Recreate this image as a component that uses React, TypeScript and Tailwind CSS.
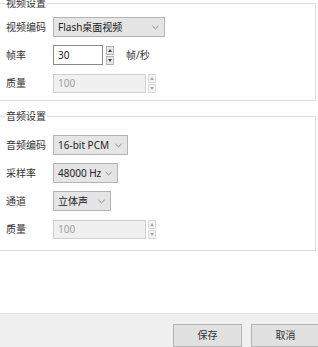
import React from 'react';

const font = { fontFamily: '"Noto Sans", "Noto Sans CJK SC", sans-serif' };

function Chevron() {
  return (
    <svg viewBox="0 0 8 5" className="w-[7px] h-[5px] shrink-0" fill="none">
      <path d="M0.5 0.8 L4 4 L7.5 0.8" stroke="#6b6b6b" strokeWidth="0.9" />
    </svg>
  );
}

function Combo({ value, width }: { value: string; width: string }) {
  return (
    <div className={`${width} h-[20px] flex items-center justify-between pl-[4px] pr-[5px] bg-[#e5e5e5] border border-[#b4b4b4] text-[#222]`}>
      <span className="truncate">{value}</span>
      <Chevron />
    </div>
  );
}

function Spinner({ disabled }: { disabled?: boolean }) {
  const half = disabled
    ? 'border-[#d8d8d8] bg-[#f4f4f4]'
    : 'border-[#b4b4b4] bg-[#e8e8e8]';
  const fill = disabled ? '#a8a8a8' : '#444';
  return (
    <div className="w-[8px] h-full flex flex-col gap-[1px]">
      <div className={`flex-1 border ${half} flex items-center justify-center`}>
        <svg viewBox="0 0 4 3" className="w-[4px] h-[3px]"><path d="M0 3 L2 0 L4 3 Z" fill={fill} /></svg>
      </div>
      <div className={`flex-1 border ${half} flex items-center justify-center`}>
        <svg viewBox="0 0 4 3" className="w-[4px] h-[3px]"><path d="M0 0 L2 3 L4 0 Z" fill={fill} /></svg>
      </div>
    </div>
  );
}

function Row({ label, children }: { label: string; children: React.ReactNode }) {
  return (
    <div className="flex items-center h-[20px]">
      <span className="w-[47px] shrink-0 text-[#333]">{label}</span>
      {children}
    </div>
  );
}

function Group({ title, children, className }: { title: string; children: React.ReactNode; className: string }) {
  return (
    <fieldset className={`mr-[2px] border-t border-r border-b border-[#dcdcdc] ${className}`}>
      <legend className="ml-[5px] px-[1px] leading-[14px] text-[#333]">{title}</legend>
      {children}
    </fieldset>
  );
}

export default function App() {
  return (
    <div className="w-[318px] h-[347px] overflow-hidden bg-white flex flex-col text-[10px]" style={font}>
      {/* 视频设置 */}
      <Group title="视频设置" className="-mt-[4px] pt-[7px] pb-[7px]">
        <div className="pl-[6px] flex flex-col gap-[8px]">
          <Row label="视频编码">
            <Combo value="Flash桌面视频" width="w-[112px]" />
          </Row>
          <Row label="帧率">
            <div className="w-[50px] h-[20px] flex items-center pl-[4px] bg-white border border-[#8a8a8a] text-[#222]">30</div>
            <div className="ml-[3px] h-[19px]"><Spinner /></div>
            <span className="ml-[12px] text-[#333]">帧/秒</span>
          </Row>
          <Row label="质量">
            <div className="w-[93px] h-[19px] flex items-center pl-[4px] bg-[#f0f0f0] border border-[#cfcfcf] text-[#a0a0a0]">100</div>
            <div className="ml-[2px] h-[19px]"><Spinner disabled /></div>
          </Row>
        </div>
      </Group>

      {/* 音频设置 */}
      <Group title="音频设置" className="mt-[8px] pt-[12px] pb-[11px]">
        <div className="pl-[6px] flex flex-col gap-[8px]">
          <Row label="音频编码">
            <Combo value="16-bit PCM" width="w-[75px]" />
          </Row>
          <Row label="采样率">
            <Combo value="48000 Hz" width="w-[65px]" />
          </Row>
          <Row label="通道">
            <Combo value="立体声" width="w-[58px]" />
          </Row>
          <Row label="质量">
            <div className="w-[93px] h-[19px] flex items-center pl-[4px] bg-[#f0f0f0] border border-[#cfcfcf] text-[#a0a0a0]">100</div>
            <div className="ml-[2px] h-[19px]"><Spinner disabled /></div>
          </Row>
        </div>
      </Group>

      <div className="flex-1" />

      {/* 按钮栏 */}
      <div className="h-[34px] shrink-0 bg-[#f0f0f0] border-t border-[#e2e2e2] flex justify-end gap-[9px] pt-[10px] -mr-[2px]">
        <button className="w-[69px] h-[23px] bg-[#e1e1e1] border border-[#b4b4b4] text-[#333]">保存</button>
        <button className="w-[69px] h-[23px] bg-[#e1e1e1] border border-[#b4b4b4] text-[#333]">取消</button>
      </div>
    </div>
  );
}
